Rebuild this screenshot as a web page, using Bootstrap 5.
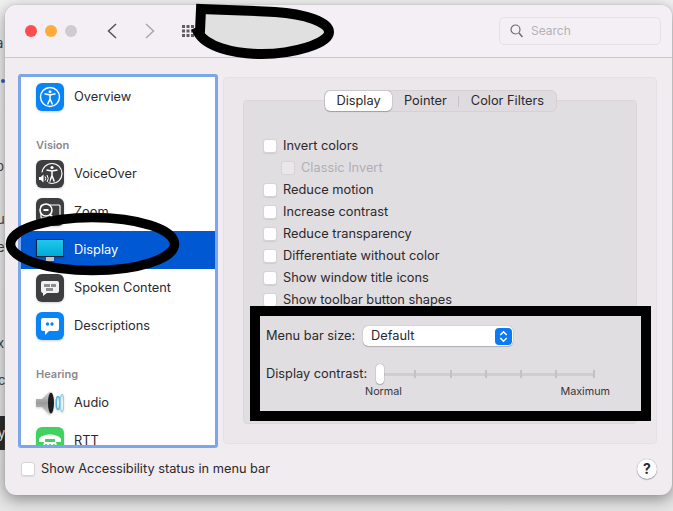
<!DOCTYPE html>
<html lang="en"><head><meta charset="utf-8"><title>Accessibility</title>
<link href="https://cdn.jsdelivr.net/npm/bootstrap@5.3.0/dist/css/bootstrap.min.css" rel="stylesheet">
<style>
html,body{height:100%}
body{margin:0;background:linear-gradient(#f2f2f2,#e6e6e6);width:673px;height:511px;overflow:hidden;position:relative;font-family:Inter,"Liberation Sans",sans-serif;font-size:12.8px;color:#2b292c}
.under{position:absolute;left:0;top:0;width:5px;height:511px;overflow:hidden;font-size:13px;color:#444}
.under span{position:absolute;white-space:nowrap;line-height:16px}
.under .blk{left:0;top:416px;width:5px;height:34px;background:#2e2e2e;color:#fff;line-height:34px}
.under .bluedot{left:1px;top:79px;width:4px;height:4px;border-radius:50%;background:#2c62c8}
.win{position:absolute;left:5px;top:5px;width:667px;height:490px;background:#f0ecf0;border-radius:11px;box-shadow:0 0 1px #8f8f8f,0 4px 16px rgba(0,0,0,.42);display:flex;flex-direction:column;overflow:hidden}
.tbar{height:53px;flex:none;background:#f3eff4;border-bottom:1px solid #c9c5ca;padding-left:20px}
.dot{width:12px;height:12px;border-radius:50%}
.search{width:162px;height:28px;border:1px solid #e4e0e5;border-radius:5px;color:#b5b1b6;margin-right:11px;padding-left:10px;font-size:12px}
.body{flex:1;min-height:0;padding:16px 15px 0 13px}
.side{width:200px;height:374px;flex:none;border:3px solid #7ca5ec;border-radius:3px;background:#fff;overflow:hidden;padding-top:1px}
.rw{height:38px;padding-left:15px;gap:10px;flex:none}
.rw.sel{background:#0058d2;color:#fff}
.ico{width:28px;height:28px;flex:none;display:block;filter:drop-shadow(0 1px 1px rgba(0,0,0,.18))}
.hd{height:39px;flex:none;padding:22px 0 0 15px;font-size:11px;font-weight:600;color:#8c898d;line-height:14px}
.outer{width:434px;height:367px;margin:3px 0 0 5px;background:#ebe7eb;border:1px solid #e4e0e5;border-radius:4px;padding:22px 19px 19px;position:relative}
.inner{height:100%;background:#e1dee2;border:1px solid #dad6da;border-radius:4px;padding:34px 0 0 19px}
.tabs{position:absolute;left:100px;top:12px;width:233px;height:22px;background:#dfdbdf;border:1px solid #d5d1d5;border-radius:6px}
.tab{height:20px;padding:0 11px 0 12px;line-height:20px}
.tab.on{width:67px;background:#fff;border-radius:5px;box-shadow:0 0 1px rgba(0,0,0,.5),0 1px 1px rgba(0,0,0,.2);text-align:center;padding:0}
.sep{width:1px;height:11px;background:#c5c1c5}
.ck{height:22px;gap:6px}
.bx{width:14px;height:14px;flex:none;background:#fff;border:1px solid #d6d2d6;border-radius:3px;box-shadow:0 1px 1px rgba(0,0,0,.08)}
.ck.off{padding-left:18px;color:#b1aeb2}
.ck.off .bx{background:#ebe8eb;border-color:#d6d3d6;box-shadow:none}
.frame{position:absolute;left:26px;top:228px;width:401px;height:115px;border:10px solid #000;padding:10px 5px 0 6px;background:#e1dee2}
.lbl{width:97px;flex:none}
.sel-box{width:150px;height:20px;background:#fff;border-radius:5px;box-shadow:0 0 1px rgba(0,0,0,.45),0 1px 1px rgba(0,0,0,.18);padding:0 1px 0 8px}
.stp{width:17px;height:17px;background:#0a7bf5;border-radius:4px;display:block}
.fr2{margin-top:18px}
.lbl2{width:114px;flex:none}
.scale{margin:0 0 0 99px;width:245px;font-size:10.8px;color:#38363a;line-height:16px}
.track{position:relative;width:214px;height:20px}
.line{position:absolute;left:0;right:0;top:9px;height:3px;background:#d0cdd0}
.tick{position:absolute;top:6px;width:2px;height:8px;background:#c4c1c4}
.thumb{position:absolute;left:-4px;top:0;width:8px;height:20px;background:#fff;border-radius:4px;box-shadow:0 0 1px rgba(0,0,0,.5),0 1px 1px rgba(0,0,0,.2)}
.foot{height:47px;flex:none;padding:0 15px 6px 16px;gap:6px}
.help{width:20px;height:20px;border-radius:50%;background:#fff;box-shadow:0 0 1px rgba(0,0,0,.45),0 1px 1px rgba(0,0,0,.25);font-weight:700;font-size:14px;line-height:20px;text-align:center}
.ov{position:absolute;overflow:visible;pointer-events:none}
</style></head><body>
<div class="under">
<span style="left:-4px;top:35px">a</span><span class="bluedot"></span><span style="left:-4px;top:158px">p</span><span style="left:-3px;top:211px">ul</span><span style="left:-3px;top:239px">e</span><span style="left:-3px;top:335px">x</span><span style="left:-2px;top:372px">c</span><span class="blk"><span style="left:-2px;top:0;line-height:34px">y</span></span>
</div>
<div class="win">
 <div class="tbar d-flex align-items-center">
  <div class="d-flex gap-2"><span class="dot" style="background:#fc4e50"></span><span class="dot" style="background:#fdac38"></span><span class="dot" style="background:#cfcbcf"></span></div>
  <svg width="14" height="18" viewBox="0 0 14 18" style="margin-left:28px"><path d="M11 2 3.500 9l7.500 7" fill="none" stroke="#55525a" stroke-width="1.500"/></svg>
  <svg width="14" height="18" viewBox="0 0 14 18" style="margin-left:24px"><path d="M3 2l7.500 7L3 16" fill="none" stroke="#aaa7ac" stroke-width="1.500"/></svg>
  <svg width="12" height="12" viewBox="0 0 12 12" style="margin-left:25px" fill="#605d62"><rect width="3" height="3"/><rect x="4.500" width="3" height="3"/><rect x="9" width="3" height="3"/><rect y="4.500" width="3" height="3"/><rect x="4.500" y="4.500" width="3" height="3"/><rect x="9" y="4.500" width="3" height="3"/><rect y="9" width="3" height="3"/><rect x="4.500" y="9" width="3" height="3"/><rect x="9" y="9" width="3" height="3"/></svg>
  <div class="search d-flex align-items-center gap-2 ms-auto"><svg width="13" height="14" viewBox="0 0 13 14"><circle cx="5.500" cy="5.500" r="4.500" fill="none" stroke="#6d6a6f" stroke-width="1.200"/><path d="M9 9l3.500 4" stroke="#6d6a6f" stroke-width="1.500"/></svg><span>Search</span></div>
 </div>
 <div class="body d-flex">
  <div class="side d-flex flex-column">
   <div class="rw d-flex align-items-center"><svg class="ico" viewBox="0 0 28 28"><rect width="28" height="28" rx="6" fill="#0a84f5"/><circle cx="14" cy="14" r="9.500" fill="none" stroke="#fff" stroke-width="1.400"/><circle cx="14" cy="8.700" r="1.500" fill="#fff"/><path d="M8.500 10.800 14 12l5.500-1.200M14 12v4l-2.500 5.500M14 16l2.500 5.500" fill="none" stroke="#fff" stroke-width="1.500"/></svg><span>Overview</span></div>
   <div class="hd">Vision</div>
   <div class="rw d-flex align-items-center"><svg class="ico" viewBox="0 0 28 28"><rect width="28" height="28" rx="6" fill="#3e3e40"/><circle cx="16" cy="13.500" r="10" fill="none" stroke="#fff" stroke-width="1.200"/><circle cx="16" cy="7.500" r="1.600" fill="#fff"/><path d="M10.500 10 16 11l5.500-1M16 11v4.500l-2.300 6M16 15.500l2.300 6" fill="none" stroke="#fff" stroke-width="1.500"/><circle cx="7.500" cy="18.500" r="6.500" fill="#3e3e40"/><path d="M3 17h1.800L7.500 14.500v8L4.800 20H3z" fill="#fff"/><path d="M9 16.500q1.500 2 0 4M11 15q2.500 3.500 0 7" fill="none" stroke="#fff"/></svg><span>VoiceOver</span></div>
   <div class="rw d-flex align-items-center"><svg class="ico" viewBox="0 0 28 28"><rect width="28" height="28" rx="6" fill="#3e3e40"/><rect x="5" y="7" width="19" height="13" rx="1" fill="none" stroke="#fff" stroke-width="1.200"/><circle cx="10" cy="12" r="6" fill="#3e3e40" stroke="#fff" stroke-width="1.600"/><path d="M7.500 12h5M14 16.500l4 4" stroke="#fff" stroke-width="1.800"/></svg><span>Zoom</span></div>
   <div class="rw sel d-flex align-items-center"><svg class="ico" viewBox="0 0 28 28"><defs><linearGradient id="scr" x1="0" y1="0" x2="0" y2="1"><stop offset="0" stop-color="#22c8ea"/><stop offset="1" stop-color="#00a8d6"/></linearGradient></defs><rect x="10" y="20" width="8" height="5" fill="#c2c2c2"/><rect x=".5" y="3.500" width="27" height="17" fill="url(#scr)" stroke="#13233c"/></svg><span>Display</span></div>
   <div class="rw d-flex align-items-center"><svg class="ico" viewBox="0 0 28 28"><rect width="28" height="28" rx="6" fill="#3e3e40"/><path d="M7 7h14a2 2 0 0 1 2 2v8a2 2 0 0 1-2 2H11l-4 3v-3a2 2 0 0 1-2-2V9a2 2 0 0 1 2-2z" fill="#f1f1f1"/><rect x="8" y="10" width="6" height="3" fill="#8d8d8d"/><rect x="15" y="10" width="5" height="3" fill="#8d8d8d"/><rect x="10" y="14" width="7" height="3" fill="#8d8d8d"/></svg><span>Spoken Content</span></div>
   <div class="rw d-flex align-items-center"><svg class="ico" viewBox="0 0 28 28"><rect width="28" height="28" rx="6" fill="#0a84f5"/><path d="M7 6h14a2 2 0 0 1 2 2v9a2 2 0 0 1-2 2H13l-4 4v-4H7a2 2 0 0 1-2-2V8a2 2 0 0 1 2-2z" fill="#fff"/><circle cx="11.500" cy="12" r="1.700" fill="#0a84f5"/><circle cx="16" cy="12" r="1.700" fill="#0a84f5"/></svg><span>Descriptions</span></div>
   <div class="hd">Hearing</div>
   <div class="rw d-flex align-items-center"><svg class="ico" viewBox="0 0 28 28"><defs><linearGradient id="chr" x1="0" y1="0" x2="0" y2="1"><stop offset="0" stop-color="#dcdcdc"/><stop offset=".5" stop-color="#9a9a9a"/><stop offset="1" stop-color="#d0d0d0"/></linearGradient></defs><path d="M0 10h6l8-8v24l-8-8H0z" fill="url(#chr)"/><ellipse cx="15" cy="14" rx="3" ry="10.500" fill="#1d1d1f"/><ellipse cx="22" cy="14" rx="1.800" ry="6.500" fill="none" stroke="#4fb7d8" stroke-width="1.600"/><ellipse cx="26" cy="14" rx="1.800" ry="8.500" fill="none" stroke="#8ed3e7" stroke-width="1.300"/></svg><span>Audio</span></div>
   <div class="rw d-flex align-items-center"><svg class="ico" viewBox="0 0 28 28"><rect width="28" height="28" rx="6" fill="#3fd25e"/><path d="M3 12c3-6 19-6 22 0v3h-6v-3H9v3H3z" fill="#fff"/><path d="M8 15h12l2 8H6z" fill="#fff"/><g fill="#3fd25e"><circle cx="10" cy="18" r="1"/><circle cx="14" cy="18" r="1"/><circle cx="18" cy="18" r="1"/><circle cx="10" cy="21" r="1"/><circle cx="14" cy="21" r="1"/><circle cx="18" cy="21" r="1"/></g></svg><span>RTT</span></div>
  </div>
  <div class="outer">
   <div class="inner">
    <div class="ck d-flex align-items-center"><span class="bx"></span><span>Invert colors</span></div>
    <div class="ck off d-flex align-items-center"><span class="bx"></span><span>Classic Invert</span></div>
    <div class="ck d-flex align-items-center"><span class="bx"></span><span>Reduce motion</span></div>
    <div class="ck d-flex align-items-center"><span class="bx"></span><span>Increase contrast</span></div>
    <div class="ck d-flex align-items-center"><span class="bx"></span><span>Reduce transparency</span></div>
    <div class="ck d-flex align-items-center"><span class="bx"></span><span>Differentiate without color</span></div>
    <div class="ck d-flex align-items-center"><span class="bx"></span><span>Show window title icons</span></div>
    <div class="ck d-flex align-items-center"><span class="bx"></span><span>Show toolbar button shapes</span></div>
   </div>
   <div class="tabs d-flex align-items-center"><div class="tab on">Display</div><div class="tab">Pointer</div><span class="sep"></span><div class="tab">Color Filters</div></div>
   <div class="frame">
    <div class="d-flex align-items-center"><span class="lbl">Menu bar size:</span><div class="sel-box d-flex align-items-center justify-content-between"><span>Default</span><svg class="stp" viewBox="0 0 16 16"><path d="M5 6.500 8 3.500l3 3M5 9.500l3 3 3-3" fill="none" stroke="#fff" stroke-width="1.400"/></svg></div></div>
    <div class="fr2 d-flex align-items-center"><span class="lbl2">Display contrast:</span><div class="track"><span class="line"></span><span class="tick" style="left:34px"></span><span class="tick" style="left:70px"></span><span class="tick" style="left:105px"></span><span class="tick" style="left:140px"></span><span class="tick" style="left:175px"></span><span class="tick" style="left:213px"></span><span class="thumb"></span></div></div>
    <div class="scale d-flex justify-content-between"><span>Normal</span><span>Maximum</span></div>
   </div>
  </div>
 </div>
 <div class="foot d-flex align-items-center"><span class="bx"></span><span>Show Accessibility status in menu bar</span><span class="help ms-auto">?</span></div>
</div>
<svg class="ov" style="left:0;top:0" width="673" height="511" viewBox="0 0 673 511"><path d="M201 9C235 10 255 11 275 12 305 14 329 22 329 32 329 44 292 54 262 54 232 54 205 46 198 32L200 31Z" fill="#e0e0e0" stroke="#000" stroke-width="10"/><ellipse cx="92.500" cy="244" rx="82" ry="26.500" fill="none" stroke="#000" stroke-width="9.500"/></svg>
<script src="https://cdn.jsdelivr.net/npm/bootstrap@5.3.0/dist/js/bootstrap.bundle.min.js"></script>
</body></html>
